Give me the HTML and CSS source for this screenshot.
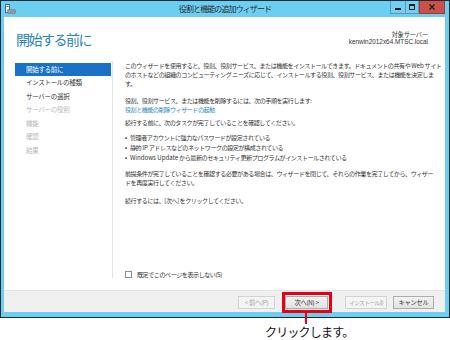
FILE: index.html
```html
<!DOCTYPE html>
<html lang="ja">
<head>
<meta charset="utf-8">
<title>役割と機能の追加ウィザード</title>
<link rel="stylesheet" href="styles.css">
</head>
<body>
<div class="window">
  <div class="titlebar">
    <svg class="app-icon" width="11" height="10" viewBox="0 0 11 10">
      <rect x="0.5" y="0.5" width="4" height="8" fill="#ffffff" stroke="#2f6fb8"/>
      <rect x="1.5" y="2" width="2" height="1" fill="#2f6fb8"/>
      <rect x="2.5" y="5.5" width="8" height="4" rx="1" fill="#8c9aa6" stroke="#6d7b87" stroke-width="0.6"/>
    </svg>
    <div class="title">役割と機能の追加ウィザード</div>
    <div class="caption-buttons">
      <div class="cbtn min"><span class="glyph-min"></span></div>
      <div class="cbtn max"><span class="glyph-max"></span></div>
      <div class="cbtn close">
        <svg width="6" height="6" viewBox="0 0 6 6"><path d="M0.5 0.5 L5.5 5.5 M5.5 0.5 L0.5 5.5" stroke="#2a1a1a" stroke-width="1.4"/></svg>
      </div>
    </div>
  </div>
  <div class="client">
    <div class="header">
      <h1 class="heading">開始する前に</h1>
      <div class="server">
        <div>対象サーバー</div>
        <div class="server-name">kenwin2012x64.MTSC.local</div>
      </div>
    </div>
    <div class="body">
      <ul class="nav">
        <li class="active">開始する前に</li>
        <li>インストールの種類</li>
        <li>サーバーの選択</li>
        <li class="disabled">サーバーの役割</li>
        <li class="disabled">機能</li>
        <li class="disabled">確認</li>
        <li class="disabled">結果</li>
      </ul>
      <div class="content">
        <p class="p1">このウィザードを使用すると、役割、役割サービス、または機能をインストールできます。ドキュメントの共有や <span class="latin">Web</span> サイト<br>のホストなどの組織のコンピューティング ニーズに応じて、インストールする役割、役割サービス、または機能を決定しま<br>す。</p>
        <p class="p2">役割、役割サービス、または機能を削除するには、次の手順を実行します:<br><span class="link">役割と機能の削除ウィザードの起動</span></p>
        <p class="p3">続行する前に、次のタスクが完了していることを確認してください。</p>
        <ul class="bullets">
          <li><span>管理者アカウントに強力なパスワードが設定されている</span></li>
          <li><span>静的 <span class="latin">IP</span> アドレスなどのネットワークの設定が構成されている</span></li>
          <li><span><span class="latin">Windows Update</span> から最新のセキュリティ更新プログラムがインストールされている</span></li>
        </ul>
        <p class="p4">前提条件が完了していることを確認する必要がある場合は、ウィザードを閉じて、それらの作業を完了してから、ウィザー<br>ドを再度実行してください。</p>
        <p class="p5">続行するには、[次へ] をクリックしてください。</p>
        <label class="dont-show"><span class="checkbox"></span><span>既定でこのページを表示しない(S)</span></label>
      </div>
    </div>
    <div class="footer">
      <div class="btn disabled prev">&lt; 前へ(P)</div>
      <div class="next-wrap">
        <div class="btn next">次へ(N) &gt;</div>
        <div class="callout"></div>
        <div class="callout-line"></div>
      </div>
      <div class="btn disabled install">インストール(I)</div>
      <div class="btn cancel">キャンセル</div>
    </div>
  </div>
</div>
<div class="note">クリックします。</div>
</body>
</html>
```

FILE: styles.css
```css
html, body {
  margin: 0;
  padding: 0;
  background: #ffffff;
}

body {
  width: 450px;
  height: 340px;
  overflow: hidden;
  font-family: "Noto Sans CJK JP", "Noto Sans", sans-serif;
}

.window {
  width: 450px;
  height: 318px;
  box-sizing: border-box;
  border: 1px solid #1d2b35;
  background: #6ccef1;
  display: flex;
  flex-direction: column;
}

/* title bar */
.titlebar {
  height: 16px;
  flex: none;
  display: grid;
  grid-template-columns: 1fr auto 1fr;
  align-items: start;
}

.app-icon {
  display: block;
  margin: 3px 0 0 4px;
}

.title {
  font-size: 8px;
  line-height: 15px;
  letter-spacing: -0.9px;
  color: #2b2b2b;
  white-space: nowrap;
}

.caption-buttons {
  justify-self: end;
  display: flex;
  margin-right: 4px;
  height: 13px;
}

.cbtn {
  height: 13px;
  box-sizing: border-box;
  display: flex;
  align-items: center;
  justify-content: center;
}

.cbtn.min,
.cbtn.max {
  border: 1px solid #5b98b4;
  border-top: none;
  background: #72d1f2;
}

.cbtn.min {
  width: 15px;
  border-right: none;
}

.cbtn.max {
  width: 14px;
}

.glyph-min {
  display: block;
  width: 6px;
  height: 2px;
  background: #1c1c1c;
  margin-top: 4px;
}

.glyph-max {
  display: block;
  width: 4px;
  height: 3px;
  border: 1px solid #1c1c1c;
  border-top-width: 2px;
}

.cbtn.close {
  width: 26px;
  background: #c9514c;
  border: 1px solid #9e3c38;
  border-top: none;
}

/* client area */
.client {
  flex: 1;
  margin: 0 4px 5px 3px;
  background: #ffffff;
  display: flex;
  flex-direction: column;
}

.header {
  height: 44px;
  flex: none;
  box-sizing: border-box;
  padding: 14px 17px 0 12px;
  display: flex;
  justify-content: space-between;
  align-items: flex-start;
}

.heading {
  margin: 0;
  font-size: 14px;
  line-height: 16px;
  font-weight: normal;
  letter-spacing: -1.5px;
  color: #2a85b6;
}

.server {
  margin-top: 1px;
  text-align: right;
  font-size: 6.3px;
  line-height: 6.5px;
  color: #333333;
  letter-spacing: -0.2px;
}

.server-name {
  font-family: "Liberation Sans", Arial, sans-serif;
  letter-spacing: 0;
  font-size: 6.4px;
}

.body {
  flex: 1;
  display: flex;
}

.nav {
  list-style: none;
  margin: 0 0 12px 0;
  padding: 1.5px 1px 0 11px;
  width: 96px;
  border-right: 1px solid #e3e3e3;
}

.nav li {
  height: 13.5px;
  line-height: 13.5px;
  padding-left: 11px;
  font-size: 6.5px;
  letter-spacing: -0.3px;
  color: #333333;
  white-space: nowrap;
}

.nav li.active {
  background: #1a72c6;
  color: #ffffff;
}

.nav li.disabled {
  color: #b8b8b8;
}

.content {
  flex: 1;
  padding: 0 0 11px 12px;
  display: flex;
  flex-direction: column;
  font-size: 6.1px;
  line-height: 9px;
  letter-spacing: -0.48px;
  color: #333333;
  white-space: nowrap;
}

.content p {
  margin: 0;
}

.content .latin {
  letter-spacing: 0;
}

.content .p2 { margin-top: 8px; }
.content .p3 { margin-top: 4px; }
.content .p4 { margin-top: 5px; }
.content .p5 { margin-top: 9px; }

.link {
  color: #2a86c0;
}

.bullets {
  list-style: none;
  margin: 5.5px 0 0 0;
  padding: 0;
}

.bullets li {
  display: flex;
  line-height: 10.4px;
}

.bullets li::before {
  content: "•";
  width: 5px;
  flex: none;
  color: #222222;
}

.dont-show {
  margin-top: auto;
  display: flex;
  align-items: center;
  gap: 5px;
  height: 9px;
}

.checkbox {
  display: block;
  width: 7px;
  height: 7px;
  box-sizing: border-box;
  border: 1px solid #8d8d8d;
  background: #ffffff;
}

/* footer */
.footer {
  height: 22px;
  flex: none;
  box-sizing: border-box;
  border-top: 1px solid #e2e2e2;
  background: #f0f0f0;
  display: flex;
  justify-content: flex-end;
  align-items: flex-start;
  padding: 5px 11px 0 0;
}

.btn {
  height: 13px;
  box-sizing: border-box;
  border: 1px solid #adadad;
  background: linear-gradient(#f3f3f3, #e2e2e2);
  font-size: 6.3px;
  line-height: 11px;
  letter-spacing: -0.3px;
  color: #333333;
  text-align: center;
  white-space: nowrap;
  overflow: hidden;
}

.btn.disabled {
  border-color: #d3d3d3;
  background: #f4f4f4;
  color: #a6a6a6;
}

.btn.prev { width: 37px; }
.btn.next { width: 43px; }
.btn.install { width: 42px; margin-left: 17px; font-size: 5.8px; letter-spacing: -0.7px; }
.btn.cancel { width: 41px; margin-left: 6px; }

.next-wrap {
  position: relative;
  margin-left: 10px;
}

.callout {
  position: absolute;
  left: -3px;
  top: -4px;
  width: 50px;
  height: 21px;
  box-sizing: border-box;
  border: 3px solid #e60012;
}

.callout-line {
  position: absolute;
  left: 19.5px;
  top: 17px;
  width: 2.5px;
  height: 11px;
  background: #e60012;
}

.note {
  margin: 7px 0 0 265px;
  font-size: 12px;
  line-height: 13px;
  letter-spacing: -0.8px;
  color: #111111;
  white-space: nowrap;
}
```
